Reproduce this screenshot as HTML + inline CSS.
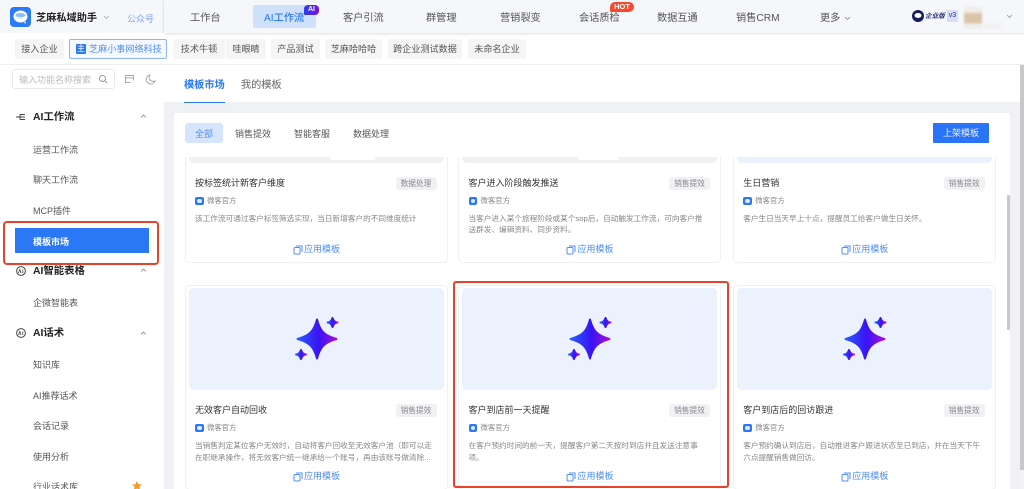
<!DOCTYPE html>
<html lang="zh"><head><meta charset="utf-8"><title>模板市场</title>
<style>
*{box-sizing:border-box;margin:0;padding:0}
html,body{width:1024px;height:489px;overflow:hidden;background:#fff}
body{font-family:"Liberation Sans","Noto Sans CJK SC",sans-serif;color:#555;position:relative}
#r{position:absolute;left:0;top:0;width:1024px;height:489px;overflow:hidden;background:#fff;filter:blur(.3px)}
.a{position:absolute}
.t{position:absolute;white-space:nowrap;line-height:14px;height:14px;transform:translateY(1px)}
.card .t{transform:none}
.nav{font-size:10.2px;color:#555;top:10.5px}
.chip{position:absolute;top:39px;height:20px;background:#f5f5f6;border-radius:2px;font-size:9.1px;line-height:20px;text-align:center;color:#555;white-space:nowrap}
.side{font-size:9px;color:#555;left:33px}
.sh{font-size:10.4px;font-weight:700;color:#222;left:33px}
.card{position:absolute;width:263px;height:205px;background:#fff;border:1px solid #eef0f3;border-radius:5px}
.img{position:absolute;left:3px;top:2px;width:255px;height:102px;background:#ebf2fe;border-radius:5px}
.ttl{left:9.5px;top:117px;font-size:9px;color:#333}
.tag{position:absolute;right:10px;top:118px;width:41px;height:13px;background:#f0f1f5;border-radius:3px;font-size:7.7px;line-height:13px;text-align:center;color:#888}
.oi{position:absolute;left:9.5px;top:137.500px;width:8.500px;height:8.500px;background:#2b78f6;border-radius:2px}
.oi:after{content:"";position:absolute;left:2px;top:2px;width:4.500px;height:4.500px;border-radius:50%;background:#dce9ff}
.of{left:21.5px;top:135px;font-size:7.4px;color:#888}
.d{left:9.5px;font-size:7.65px;color:#888}
.ap{left:118.5px;top:183px;font-size:9px;color:#4f8cf5}
.ai{position:absolute;left:107px;top:186px}
.fl{font-size:9px;color:#555;top:126px}
</style></head><body><div id="r">

<!-- top bar -->
<div class="a" style="left:0;top:0;width:1024px;height:33px;background:#f6f7fb"></div>
<div class="a" style="left:164px;top:0;width:860px;height:33px;background:#f6f7fb;box-shadow:0 1px 3px rgba(0,0,0,.12),-1px 0 1px rgba(0,0,0,.03)"></div>
<svg class="a" style="left:10px;top:7px" width="21" height="20" viewBox="0 0 21 20"><rect width="21" height="20" rx="4" fill="#2a7bf6"/><ellipse cx="10.500" cy="9.500" rx="7" ry="6" fill="#fff"/><path d="M14 15.500l1.500 1.500 0-3z" fill="#fff"/><path d="M5.500 7.500c2.500-2 7.500-2 10 0 0 2.500-2.200 4.500-5 4.500s-5-2-5-4.500z" fill="#8fbcfb"/><path d="M5.500 9.500c2.500 2 7.500 2 10 0" fill="none" stroke="#fff" stroke-width="1.200"/></svg>
<div class="t" style="left:36px;top:10.5px;font-size:10.2px;font-weight:700;color:#222">芝麻私域助手</div>
<svg class="a" style="left:103px;top:14.500px" width="7" height="5"><path d="M1 1l2.500 2.500L6 1" fill="none" stroke="#aaa" stroke-width=".8"/></svg>
<div class="t" style="left:127px;top:10.5px;font-size:9px;color:#7aa8f8">公众号</div>

<div class="a" style="left:253px;top:5px;width:63px;height:23px;background:#cfe0fb;border-radius:2px"></div>
<div class="t nav" style="left:190px">工作台</div>
<div class="t nav" style="left:264px;color:#2d7af5;font-weight:500">AI工作流</div>
<div class="a" style="left:304px;top:5px;width:15px;height:10px;border-radius:4px 4px 4px 1px;background:linear-gradient(90deg,#2a3cf0,#7a10d8);color:#fff;font-size:7px;font-weight:700;line-height:10px;text-align:center">AI</div>
<div class="t nav" style="left:343px">客户引流</div>
<div class="t nav" style="left:426px">群管理</div>
<div class="t nav" style="left:500px">营销裂变</div>
<div class="t nav" style="left:579px">会话质检</div>
<div class="a" style="left:610px;top:2px;width:24px;height:10px;border-radius:5px 5px 5px 1px;background:#f8492f;color:#fff;font-size:7.500px;font-weight:700;line-height:10px;text-align:center">HOT</div>
<div class="t nav" style="left:657px">数据互通</div>
<div class="t nav" style="left:736px">销售CRM</div>
<div class="t nav" style="left:820px">更多</div>
<svg class="a" style="left:844px;top:15.500px" width="7" height="5"><path d="M1 1l2.500 2.500L6 1" fill="none" stroke="#888" stroke-width=".8"/></svg>

<svg class="a" style="left:912px;top:10px" width="12" height="12"><circle cx="6" cy="6" r="6" fill="#141b5a"/><ellipse cx="6" cy="5.500" rx="3.500" ry="2.500" fill="#fff"/></svg>
<div class="t" style="left:925px;top:8.5px;font-size:6.600px;font-style:italic;font-weight:700;color:#27307a">企业版</div>
<div class="a" style="left:947px;top:10px;width:11px;height:12px;background:#d8dcfb;color:#27307a;font-size:7px;line-height:12px;text-align:center">v3</div>
<div class="a" style="left:964px;top:7px;width:18px;height:22px;background:linear-gradient(180deg,#f1ece6 0,#f1ece6 24%,#dcc4a8 30%,#dcc4a8 72%,#eee 78%);filter:blur(1px)"></div>
<div class="a" style="left:982px;top:24px;width:20px;height:5px;background:#f0f0f0;filter:blur(1px)"></div>
<svg class="a" style="left:1006px;top:14px" width="7" height="5"><path d="M1 1l2.500 2.500L6 1" fill="none" stroke="#999" stroke-width=".8"/></svg>

<!-- chips -->
<div class="chip" style="left:15px;width:49px">接入企业</div>
<div class="chip" style="left:69px;width:98px;background:#f4f8ff;border:1px solid #8db5f7;color:#4f8cf5;line-height:18px;text-align:left;padding-left:19px">芝麻小事网络科技</div>
<div class="a" style="left:76px;top:44px;width:10px;height:10px;background:#2b78f6;border-radius:1px;color:#fff;font-size:8px;line-height:10px;text-align:center">主</div>
<div class="chip" style="left:173px;width:52px">技术牛顿</div>
<div class="chip" style="left:226px;width:40px">哇眼睛</div>
<div class="chip" style="left:271px;width:49px">产品测试</div>
<div class="chip" style="left:325px;width:57px">芝麻哈哈哈</div>
<div class="chip" style="left:388px;width:74px">跨企业测试数据</div>
<div class="chip" style="left:468px;width:58px">未命名企业</div>
<div class="a" style="left:0;top:64px;width:1024px;height:1px;background:#eeeeef"></div>

<!-- sidebar -->
<div class="a" style="left:12px;top:69px;width:103px;height:20px;border:1px solid #e8e8e8;border-radius:3px"></div>
<div class="t" style="left:19px;top:72px;font-size:9px;color:#bbb">输入功能名称搜索</div>
<svg class="a" style="left:98px;top:74px" width="10" height="10" fill="none" stroke="#999"><circle cx="4.500" cy="4.500" r="3"/><path d="M7 7l2 2"/></svg>
<svg class="a" style="left:124px;top:74px" width="11" height="10" fill="none" stroke="#aaa"><path d="M1.500 8.500v-7h8v5M1.500 4h8M1.500 8.500h5"/></svg>
<svg class="a" style="left:145px;top:74px" width="11" height="11" fill="none" stroke="#aaa"><path d="M5 1a4.500 4.500 0 1 0 5 6 4 4 0 0 1-5-6z"/></svg>

<svg class="a" style="left:16px;top:112px" width="10" height="10" fill="none" stroke="#444"><path d="M0 5h4M4 2.500v5M4 2.500h5M4 5h5M4 7.500h5"/></svg>
<div class="t sh" style="top:110px">AI工作流</div>
<svg class="a" style="left:140px;top:114px" width="7" height="5"><path d="M1 3.500l2.500-2.500L6 3.500" fill="none" stroke="#888" stroke-width=".8"/></svg>
<div class="t side" style="top:142px">运营工作流</div>
<div class="t side" style="top:172px">聊天工作流</div>
<div class="t side" style="top:203px">MCP插件</div>
<div class="a" style="left:15px;top:228px;width:134px;height:25px;background:#2b78f6"></div>
<div class="t" style="left:33px;top:234px;font-size:9px;font-weight:700;color:#fff">模板市场</div>
<svg class="a" style="left:16px;top:266px" width="10" height="10" fill="none" stroke="#444"><circle cx="5" cy="5" r="4.400"/><path d="M2.500 7l1.300-3.500L5 7M6.800 3.500V7" stroke-width=".8"/></svg>
<div class="t sh" style="top:264px">AI智能表格</div>
<svg class="a" style="left:140px;top:268px" width="7" height="5"><path d="M1 3.500l2.500-2.500L6 3.500" fill="none" stroke="#888" stroke-width=".8"/></svg>
<div class="t side" style="top:295px">企微智能表</div>
<svg class="a" style="left:16px;top:328px" width="10" height="10" fill="none" stroke="#444"><circle cx="5" cy="5" r="4.400"/><path d="M2.500 7l1.300-3.500L5 7M6.800 3.500V7" stroke-width=".8"/></svg>
<div class="t sh" style="top:326px">AI话术</div>
<svg class="a" style="left:140px;top:331px" width="7" height="5"><path d="M1 3.500l2.500-2.500L6 3.500" fill="none" stroke="#888" stroke-width=".8"/></svg>
<div class="t side" style="top:357px">知识库</div>
<div class="t side" style="top:388px">AI推荐话术</div>
<div class="t side" style="top:418px">会话记录</div>
<div class="t side" style="top:449px">使用分析</div>
<div class="t side" style="top:479px">行业话术库</div>
<svg class="a" style="left:131px;top:481px" width="12" height="10" viewBox="0 0 14 14"><path d="M7 0l2 4.500 5 .5-3.700 3 1 5L7 10.500 2.700 13l1-5L0 5l5-.5z" fill="#f59a1b"/></svg>

<div class="a" style="left:3px;top:221px;width:156px;height:44px;border:2px solid #e8412c;border-radius:4px"></div>

<!-- main -->
<div class="a" style="left:164px;top:65px;width:860px;height:424px;background:#f0f1f5"></div>
<div class="a" style="left:164px;top:65px;width:856px;height:37px;background:#fff"></div>
<div class="t" style="left:184px;top:77.5px;font-size:10.2px;font-weight:700;color:#2b78f6">模板市场</div>
<div class="a" style="left:184px;top:102px;width:41px;height:1px;background:#2b78f6"></div>
<div class="t" style="left:241px;top:77.5px;font-size:10.2px;color:#666">我的模板</div>
<div class="a" style="left:174px;top:113px;width:836px;height:376px;background:#fff"></div>

<div class="a" style="left:185px;top:123px;width:38px;height:20px;background:#d5e5fd;border-radius:3px"></div>
<div class="t fl" style="left:195px;color:#4f8cf5">全部</div>
<div class="t fl" style="left:235px">销售提效</div>
<div class="t fl" style="left:294px">智能客服</div>
<div class="t fl" style="left:353px">数据处理</div>
<div class="a" style="left:933px;top:123px;width:56px;height:20px;background:#2a74f8;color:#e8f0ff;font-size:9px;line-height:20px;text-align:center;border-radius:1px">上架模板</div>

<svg width="0" height="0" style="position:absolute"><defs><linearGradient id="g" x1="0" x2="1" y1="0" y2="0"><stop offset="0" stop-color="#2a5cff"/><stop offset=".55" stop-color="#3a12f2"/><stop offset="1" stop-color="#a810d8"/></linearGradient></defs></svg>

<div class="a" style="left:174px;top:157px;width:832px;height:332px;overflow:hidden">
 <!-- row 1 -->
 <div class="card" style="left:10.500px;top:-99px"><div class="img" style="background:#f0f1f5"></div><div class="a" style="left:144px;top:0;width:45px;height:101px;background:#fff"></div><div class="t ttl">按标签统计新客户维度</div><div class="tag">数据处理</div><i class="oi"></i><div class="t of">微客官方</div><div class="t d" style="top:153px">该工作流可通过客户标签筛选实现，当日新增客户的不同维度统计</div><svg class="ai" width="10" height="10" fill="none" stroke="#4f8cf5"><rect x="1" y="2.500" width="6" height="6.500" rx="1"/><path d="M3 1h6v6"/></svg><div class="t ap">应用模板</div></div>
 <div class="card" style="left:284px;top:-99px"><div class="img" style="background:#f0f1f5"></div><div class="a" style="left:119px;top:0;width:40px;height:101px;background:#fff"></div><div class="t ttl">客户进入阶段触发推送</div><div class="tag">销售提效</div><i class="oi"></i><div class="t of">微客官方</div><div class="t d" style="top:153px">当客户进入某个旅程阶段或某个sop后，自动触发工作流，可向客户推</div><div class="t d" style="top:164px">送群发、编辑资料、同步资料。</div><svg class="ai" width="10" height="10" fill="none" stroke="#4f8cf5"><rect x="1" y="2.500" width="6" height="6.500" rx="1"/><path d="M3 1h6v6"/></svg><div class="t ap">应用模板</div></div>
 <div class="card" style="left:558.700px;top:-99px"><div class="img"></div><div class="t ttl">生日营销</div><div class="tag">销售提效</div><i class="oi"></i><div class="t of">微客官方</div><div class="t d" style="top:153px">客户生日当天早上十点，提醒员工给客户做生日关怀。</div><svg class="ai" width="10" height="10" fill="none" stroke="#4f8cf5"><rect x="1" y="2.500" width="6" height="6.500" rx="1"/><path d="M3 1h6v6"/></svg><div class="t ap">应用模板</div></div>

 <!-- row 2 -->
 <div class="card" style="left:10.500px;top:128px"><div class="img"><svg class="a" style="left:100px;top:23px" width="56" height="56" viewBox="-28 -28 56 56"><path fill="url(#g)" d="M0-19.500C3-8 7-3.500 19.500 0 7 3.500 3 8 0 19.500-3 8-7 3.500-19.500 0-7-3.500-3-8 0-19.500Z" stroke="url(#g)" stroke-width="2" stroke-linejoin="round"/><path fill="url(#g)" d="M15.500-21C16.500-18 18-16.500 20.500-16.500 18-16.500 16.500-15 15.500-12 14.500-15 13-16.500 10.500-16.500 13-16.500 14.500-18 15.500-21Z" stroke="url(#g)" stroke-width="2" stroke-linejoin="round"/><path fill="url(#g)" d="M-16 11C-15 14-13.500 15.500-11 15.500-13.500 15.500-15 17-16 20-17 17-18.500 15.500-21 15.500-18.500 15.500-17 14-16 11Z" stroke="url(#g)" stroke-width="2" stroke-linejoin="round"/></svg></div><div class="t ttl">无效客户自动回收</div><div class="tag">销售提效</div><i class="oi"></i><div class="t of">微客官方</div><div class="t d" style="top:153px">当销售判定某位客户无效时，自动将客户回收至无效客户池（即可以走</div><div class="t d" style="top:165px">在职继承操作，将无效客户统一继承给一个账号，再由该账号做清除...</div><svg class="ai" width="10" height="10" fill="none" stroke="#4f8cf5"><rect x="1" y="2.500" width="6" height="6.500" rx="1"/><path d="M3 1h6v6"/></svg><div class="t ap">应用模板</div></div>
 <div class="card" style="left:284px;top:128px"><div class="img"><svg class="a" style="left:100px;top:23px" width="56" height="56" viewBox="-28 -28 56 56"><path fill="url(#g)" d="M0-19.500C3-8 7-3.500 19.500 0 7 3.500 3 8 0 19.500-3 8-7 3.500-19.500 0-7-3.500-3-8 0-19.500Z" stroke="url(#g)" stroke-width="2" stroke-linejoin="round"/><path fill="url(#g)" d="M15.500-21C16.500-18 18-16.500 20.500-16.500 18-16.500 16.500-15 15.500-12 14.500-15 13-16.500 10.500-16.500 13-16.500 14.500-18 15.500-21Z" stroke="url(#g)" stroke-width="2" stroke-linejoin="round"/><path fill="url(#g)" d="M-16 11C-15 14-13.500 15.500-11 15.500-13.500 15.500-15 17-16 20-17 17-18.500 15.500-21 15.500-18.500 15.500-17 14-16 11Z" stroke="url(#g)" stroke-width="2" stroke-linejoin="round"/></svg></div><div class="t ttl">客户到店前一天提醒</div><div class="tag">销售提效</div><i class="oi"></i><div class="t of">微客官方</div><div class="t d" style="top:153px">在客户预约时间的前一天，提醒客户第二天按时到店并且发送注意事</div><div class="t d" style="top:165px">项。</div><svg class="ai" width="10" height="10" fill="none" stroke="#4f8cf5"><rect x="1" y="2.500" width="6" height="6.500" rx="1"/><path d="M3 1h6v6"/></svg><div class="t ap">应用模板</div></div>
 <div class="card" style="left:558.700px;top:128px"><div class="img"><svg class="a" style="left:100px;top:23px" width="56" height="56" viewBox="-28 -28 56 56"><path fill="url(#g)" d="M0-19.500C3-8 7-3.500 19.500 0 7 3.500 3 8 0 19.500-3 8-7 3.500-19.500 0-7-3.500-3-8 0-19.500Z" stroke="url(#g)" stroke-width="2" stroke-linejoin="round"/><path fill="url(#g)" d="M15.500-21C16.500-18 18-16.500 20.500-16.500 18-16.500 16.500-15 15.500-12 14.500-15 13-16.500 10.500-16.500 13-16.500 14.500-18 15.500-21Z" stroke="url(#g)" stroke-width="2" stroke-linejoin="round"/><path fill="url(#g)" d="M-16 11C-15 14-13.500 15.500-11 15.500-13.500 15.500-15 17-16 20-17 17-18.500 15.500-21 15.500-18.500 15.500-17 14-16 11Z" stroke="url(#g)" stroke-width="2" stroke-linejoin="round"/></svg></div><div class="t ttl">客户到店后的回访跟进</div><div class="tag">销售提效</div><i class="oi"></i><div class="t of">微客官方</div><div class="t d" style="top:153px">客户预约确认到店后，自动推进客户跟进状态至已到店，并在当天下午</div><div class="t d" style="top:165px">六点提醒销售做回访。</div><svg class="ai" width="10" height="10" fill="none" stroke="#4f8cf5"><rect x="1" y="2.500" width="6" height="6.500" rx="1"/><path d="M3 1h6v6"/></svg><div class="t ap">应用模板</div></div>
</div>

<div class="a" style="left:453px;top:281px;width:276px;height:207px;border:2px solid #e8412c;border-radius:3px"></div>

<!-- scrollbars -->
<div class="a" style="left:1007px;top:195px;width:3px;height:135px;background:#c8c8c8;border-radius:1px"></div>
<div class="a" style="left:1020px;top:65px;width:4px;height:424px;background:#f3f3f3"></div>
<div class="a" style="left:1020px;top:65px;width:4px;height:405px;background:#c8c8c8"></div>
</div></body></html>
